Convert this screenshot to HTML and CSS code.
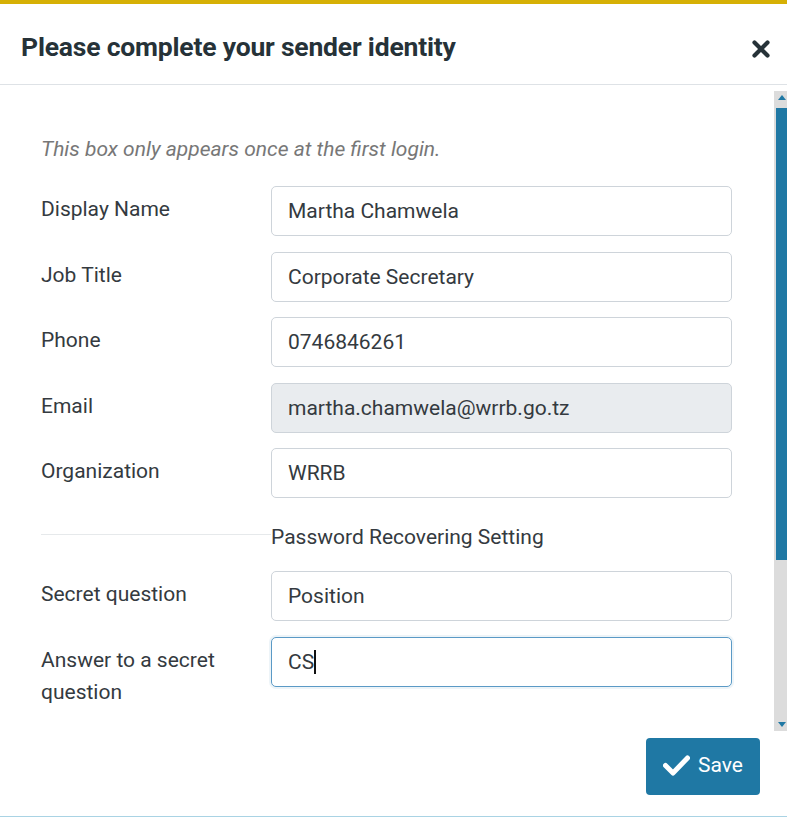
FILE: index.html
```html
<!DOCTYPE html>
<html lang="en">
<head>
    <meta charset="UTF-8">
    <meta name="viewport" content="width=device-width, initial-scale=1.0">
    <title>Sender identity</title>
    <link rel="stylesheet" href="styles.css">
</head>
<body>
    <div class="modal">
        <!-- 标题栏 -->
        <div class="modal-header">
            <h2 class="modal-title">Please complete your sender identity</h2>
            <span class="close" title="Close">
                <svg width="18" height="18" viewBox="0 0 18 18"><path d="M2.5 2.5 L15.5 15.5 M15.5 2.5 L2.5 15.5" stroke="#263238" stroke-width="4.2" stroke-linecap="round"/></svg>
            </span>
        </div>

        <!-- 表单区域 -->
        <div class="modal-body">
            <form class="identity-form">
                <p class="note">This box only appears once at the first login.</p>

                <div class="form-row">
                    <label>Display Name</label>
                    <input type="text" value="Martha Chamwela">
                </div>
                <div class="form-row">
                    <label>Job Title</label>
                    <input type="text" value="Corporate Secretary">
                </div>
                <div class="form-row">
                    <label>Phone</label>
                    <input type="text" value="0746846261">
                </div>
                <div class="form-row">
                    <label>Email</label>
                    <input type="text" value="martha.chamwela@wrrb.go.tz" readonly>
                </div>
                <div class="form-row">
                    <label>Organization</label>
                    <input type="text" value="WRRB">
                </div>

                <div class="divider">
                    <span class="divider-line"></span>
                    <span class="divider-text">Password Recovering Setting</span>
                </div>

                <div class="form-row">
                    <label>Secret question</label>
                    <input type="text" value="Position">
                </div>
                <div class="form-row">
                    <label>Answer to a secret question</label>
                    <div class="input focused">CS<span class="caret"></span></div>
                </div>
            </form>

            <!-- 假滚动条 -->
            <div class="scrollbar">
                <span class="arrow up"></span>
                <span class="thumb"></span>
                <span class="arrow down"></span>
            </div>
        </div>

        <!-- 底部按钮 -->
        <div class="modal-footer">
            <button class="btn-save" type="button">
                <svg width="27" height="22" viewBox="0 0 27 22"><path d="M2.5 11.5 L10 19 L24.5 4" fill="none" stroke="#fff" stroke-width="5" stroke-linecap="round" stroke-linejoin="round"/></svg>
                Save
            </button>
        </div>
    </div>
</body>
</html>
```

FILE: styles.css
```css
html, body {
    margin: 0;
    padding: 0;
    font-family: Roboto, "Liberation Sans", Arial, sans-serif;
    color: #343a40;
    background: #fff;
}

.modal {
    width: 787px;
    height: 817px;
    display: flex;
    flex-direction: column;
    border-top: 4px solid #d6b004;
    box-sizing: border-box;
    border-bottom: 1px solid #a9d3e4;
}

/* 标题栏 */
.modal-header {
    height: 81px;
    display: flex;
    align-items: center;
    justify-content: space-between;
    padding: 4px 17px 0 21px;
    border-bottom: 1px solid #dee2e6;
    box-sizing: border-box;
}

.modal-title {
    margin: 0;
    font-size: 26.5px;
    font-weight: 700;
    color: #263238;
    letter-spacing: -0.2px;
}

.close {
    display: flex;
    margin-top: 6px;
}

/* 表单区域 */
.modal-body {
    flex: 1;
    display: flex;
    min-height: 0;
}

.identity-form {
    flex: 1;
    padding: 49px 42px 0 41px;
}

.note {
    margin: 0 0 22px;
    font-size: 21px;
    line-height: 30px;
    font-style: italic;
    color: #777;
}

.form-row {
    display: flex;
    margin-bottom: 15.5px;
}

.form-row label {
    width: 230px;
    flex-shrink: 0;
    padding-top: 7px;
    padding-right: 20px;
    box-sizing: border-box;
    font-size: 21px;
    line-height: 32px;
}

.form-row input,
.form-row .input {
    flex: 1;
    height: 50px;
    padding: 0 16px;
    box-sizing: border-box;
    border: 1px solid #ced4da;
    border-radius: 5px;
    font-family: inherit;
    font-size: 21px;
    color: #343a40;
    background: #fff;
    outline: none;
}

.form-row input[readonly] {
    background: #e9ecef;
}

.form-row .input {
    display: flex;
    align-items: center;
}

.input.focused {
    border-color: #5b9ac6;
    box-shadow: 0 0 0 2px rgba(31, 120, 164, 0.08);
}

.caret {
    width: 1.5px;
    height: 24px;
    background: #111;
}

.divider {
    display: flex;
    align-items: center;
    margin: 24px 0 19px;
}

.divider-line {
    width: 230px;
    height: 1px;
    background: #e6e9eb;
    margin-top: -6px;
}

.divider-text {
    font-size: 21px;
    line-height: 30px;
}

/* 滚动条 */
.scrollbar {
    width: 13px;
    margin-top: 6px;
    background: #dcdcdc;
    display: flex;
    flex-direction: column;
    align-items: flex-end;
}

.arrow {
    width: 0;
    height: 0;
    margin: 4px 1px;
    border-left: 4px solid transparent;
    border-right: 4px solid transparent;
}

.arrow.up {
    border-bottom: 5px solid #1f78a4;
}

.arrow.down {
    margin-top: auto;
    border-top: 5px solid #1f78a4;
}

.thumb {
    width: 11px;
    height: 452px;
    margin-top: 4px;
    background: #1f78a4;
}

/* 底部 */
.modal-footer {
    height: 85px;
    display: flex;
    justify-content: flex-end;
    padding: 7px 27px 0 0;
    box-sizing: border-box;
}

.btn-save {
    width: 114px;
    height: 57px;
    display: flex;
    align-items: center;
    justify-content: center;
    gap: 8px;
    padding: 0 0 4px;
    border: none;
    border-radius: 4px;
    background: #1f78a4;
    color: #fff;
    font-family: inherit;
    font-size: 21px;
}
```
